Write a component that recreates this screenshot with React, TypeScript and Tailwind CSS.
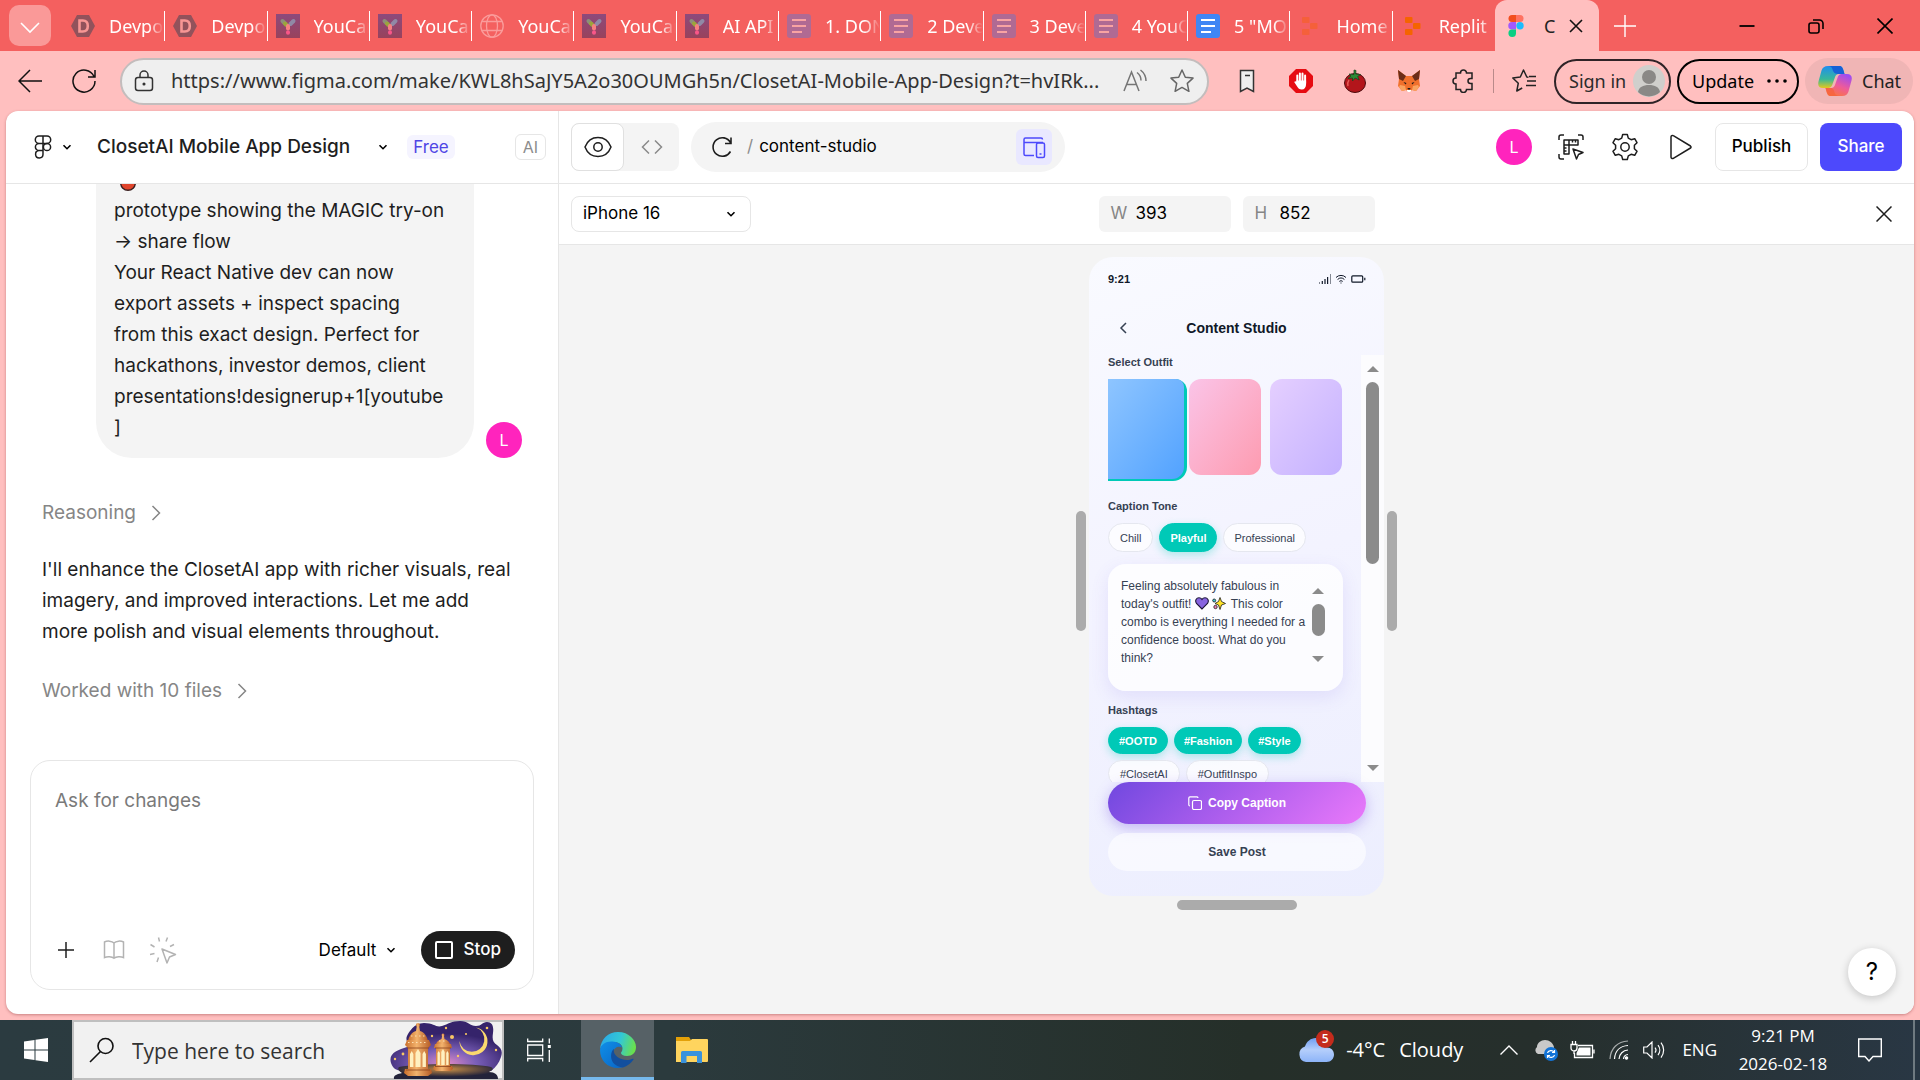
import type { ReactNode } from "react";

type IconProps = { className?: string };

function Chevron({ className = "" }: IconProps) {
  return (
    <svg viewBox="0 0 10 10" className={`size-[10px] shrink-0 ${className}`} fill="none" stroke="currentColor" strokeWidth="1.6">
      <path d="M1.5 3.2 5 6.7l3.5-3.5" />
    </svg>
  );
}

function ChevronRight() {
  return (
    <svg viewBox="0 0 10 16" className="h-4 w-[10px]" fill="none" stroke="currentColor" strokeWidth="1.5">
      <path d="m1.5 1 7 7-7 7" />
    </svg>
  );
}

// ---------- tab strip ----------

function DevpostIcon() {
  return (
    <svg viewBox="0 0 24 24" className="size-6 shrink-0">
      <path d="M6 1h12l6 11-6 11H6L0 12z" fill="#92525b" />
      <path d="M8.500 6.500h3.300c3.400 0 5 2.300 5 5.500s-1.700 5.500-5 5.500H8.500z" fill="none" stroke="#f79694" strokeWidth="2.600" />
    </svg>
  );
}

function YouCamIcon() {
  return (
    <svg viewBox="0 0 24 24" className="size-6 shrink-0">
      <defs>
        <linearGradient id="ycam" x1="0" y1="0" x2="0" y2="1">
          <stop offset="0" stopColor="#8d4a7c" />
          <stop offset="1" stopColor="#98425c" />
        </linearGradient>
      </defs>
      <path fill="url(#ycam)" d="M0 0h24v24H0z" />
      <g strokeWidth="4" strokeLinecap="round">
        <path d="m6.500 7 2 2" stroke="#8d8f7a" />
        <path d="m17.500 7-3 3" stroke="#9089a6" />
        <path d="m9 9.500 1.500 1.500" stroke="#9ca53a" />
        <path d="M12 12v2.500" stroke="#f77f80" />
        <path d="M12 18.300v.4" stroke="#f95688" />
      </g>
    </svg>
  );
}

function GlobeIcon() {
  return (
    <svg viewBox="0 0 24 24" className="size-6 shrink-0" fill="none" stroke="#fa9c9b" strokeWidth="1.300">
      <circle cx="12" cy="12" r="11.200" />
      <ellipse cx="12" cy="12" rx="5.500" ry="11.200" />
      <path d="M2 7.500h20M2 16.500h20" />
    </svg>
  );
}

function DocIcon({ active = false }: { active?: boolean }) {
  return (
    <svg viewBox="0 0 24 24" className="size-6 shrink-0">
      <rect width="24" height="24" rx="3" fill={active ? "#4086f4" : "#b06a93"} />
      <path d="M5 6h14M5 12h14M5 18h10" stroke={active ? "#fff" : "#f9a3a2"} strokeWidth="2.200" />
    </svg>
  );
}

function ReplitIcon({ dim = false }: { dim?: boolean }) {
  return (
    <svg viewBox="0 0 24 24" className="size-6 shrink-0" fill={dim ? "#f5603a" : "#f56400"}>
      <rect x="4" y="3" width="7.500" height="6" rx="1" />
      <rect x="12" y="9" width="7.500" height="6" rx="1" />
      <rect x="4" y="15" width="7.500" height="6" rx="1" />
    </svg>
  );
}

function FigmaColor() {
  return (
    <svg viewBox="0 0 16 24" className="h-6 w-4 shrink-0">
      <path d="M4 1h4v7H4a3.500 3.500 0 0 1 0-7z" fill="#f24e1e" />
      <path d="M8 1h4a3.500 3.500 0 0 1 0 7H8z" fill="#ff7262" />
      <path d="M4 8h4v7.500H4A3.700 3.700 0 0 1 4 8z" fill="#a259ff" />
      <circle cx="12" cy="11.700" r="3.700" fill="#1abcfe" />
      <path d="M4 15.500h4v4a3.800 3.800 0 1 1-4-4z" fill="#0acf83" />
    </svg>
  );
}

const tabs: { title: string; icon: ReactNode }[] = [
  { title: "Devpost", icon: <DevpostIcon /> },
  { title: "Devpost", icon: <DevpostIcon /> },
  { title: "YouCam", icon: <YouCamIcon /> },
  { title: "YouCam", icon: <YouCamIcon /> },
  { title: "YouCam", icon: <GlobeIcon /> },
  { title: "YouCam", icon: <YouCamIcon /> },
  { title: "AI API", icon: <YouCamIcon /> },
  { title: "1. DON", icon: <DocIcon /> },
  { title: "2 Deve", icon: <DocIcon /> },
  { title: "3 Deve", icon: <DocIcon /> },
  { title: "4 YouC", icon: <DocIcon /> },
  { title: '5 "MO', icon: <DocIcon active /> },
  { title: "Home", icon: <ReplitIcon dim /> },
  { title: "Replit", icon: <ReplitIcon /> },
];

function TabStrip() {
  return (
    <div className="flex h-[51px] items-stretch bg-[#f4605f] text-white">
      <button aria-label="Tab actions" className="my-[5px] ml-[9px] mr-3 flex w-[42px] items-center justify-center rounded-[10px] bg-[#fa9998]">
        <svg viewBox="0 0 20 12" className="mt-1 h-3 w-5" fill="none" stroke="#fff" strokeWidth="1.600">
          <path d="m1 1 9 9 9-9" />
        </svg>
      </button>
      <div role="tablist" className="flex min-w-0 flex-1">
        {tabs.map((tab, i) => (
          <button key={i} role="tab" aria-selected={false} className="flex min-w-0 flex-1 items-center">
            <span className="flex min-w-0 flex-1 items-center gap-[14px] pl-2">
              {tab.icon}
              <span className="min-w-0 flex-1 overflow-hidden whitespace-nowrap text-left text-[18px] leading-6 [mask-image:linear-gradient(to_right,#000_72%,transparent)]">
                {tab.title}
              </span>
            </span>
            {i < tabs.length - 1 && <span className="h-[30px] w-px bg-white" />}
          </button>
        ))}
      </div>
      <div className="flex w-[104px] items-center justify-between rounded-t-[12px] bg-[#ffbfbf] pl-[13px] pr-4 text-[#222]">
        <button role="tab" aria-selected className="flex items-center gap-5 text-[18px] leading-6">
          <FigmaColor />
          <span>C</span>
        </button>
        <button aria-label="Close tab">
          <svg viewBox="0 0 14 14" className="size-[14px]" stroke="#111" strokeWidth="1.600">
            <path d="m1 1 12 12M13 1 1 13" />
          </svg>
        </button>
      </div>
      <button aria-label="New tab" className="ml-[15px] self-center">
        <svg viewBox="0 0 22 22" className="size-[22px]" stroke="#fff" strokeWidth="1.400">
          <path d="M11 0v22M0 11h22" />
        </svg>
      </button>
      <div className="ml-[76px] flex w-[208px] items-center text-black">
        <button aria-label="Minimize" className="flex flex-1 justify-center">
          <svg viewBox="0 0 16 16" className="size-4" stroke="currentColor" strokeWidth="1.800"><path d="M.5 8h15" /></svg>
        </button>
        <button aria-label="Restore" className="flex flex-1 justify-center">
          <svg viewBox="0 0 16 16" className="size-4" fill="none" stroke="currentColor" strokeWidth="1.600">
            <rect x="1" y="5" width="10" height="10" rx="2" />
            <path d="M5 2h6.500A3.500 3.500 0 0 1 15 5.500V11" />
          </svg>
        </button>
        <button aria-label="Close" className="flex flex-1 justify-center">
          <svg viewBox="0 0 16 16" className="size-4" stroke="currentColor" strokeWidth="1.600"><path d="m.5.5 15 15m0-15-15 15" /></svg>
        </button>
      </div>
    </div>
  );
}

// ---------- address bar ----------

function FoxIcon() {
  return (
    <svg viewBox="0 0 24 24" className="size-6">
      <path d="M1 1 9 7h6l8-6-1 9 1 7-4 5-4-1-1.500 2h-3L9 21l-4 1-4-5 1-7z" fill="#f0702c" />
      <path d="m1 1 8 6-3 5-4-2zM23 1l-8 6 3 5 4-2z" fill="#6b2c17" />
      <path d="m3 16 5 1 1 4-4 1-3-4zM21 16l-5 1-1 4 4 1 3-4z" fill="#f9a35f" />
      <path d="M9.500 21h5l-1 2h-3z" fill="#fff" />
      <path d="m6.500 13 3 1-1 1.500zM17.500 13l-3 1 1 1.500zM10.500 19h3l-.5 1.500h-2z" fill="#1d1a1a" />
    </svg>
  );
}

function TomatoIcon() {
  return (
    <svg viewBox="0 0 24 24" className="size-6">
      <ellipse cx="12" cy="14" rx="10.500" ry="9.500" fill="#b3151b" stroke="#4d0b0d" />
      <path d="M6 11c-1.500 2-1.500 4-1 6" stroke="#e65a55" strokeWidth="1.500" fill="none" />
      <path d="m11 1 2 .5-.3 3.500 5 .5-3 2 1.500 3.500-4-2-2.700 3V9L5 9.500l3-2.500-2-2 5 .5z" fill="#2c8a36" stroke="#15401b" strokeWidth=".700" />
    </svg>
  );
}

function AdblockIcon() {
  return (
    <svg viewBox="0 0 24 24" className="size-6">
      <path d="M7 0h10l7 7v10l-7 7H7l-7-7V7z" fill="#e60c12" />
      <g stroke="#fff" strokeWidth="2" strokeLinecap="round" fill="none">
        <path d="M8.300 6.500V13M10.900 4.500V12M13.500 4.500V12M16.100 6.500V14" />
      </g>
      <path d="M7.300 11.500h9.800v3.500c0 3.500-1.600 5.500-4.300 5.500-2.400 0-3.600-1-5-3.500l-2.600-4c.8-1 1.700-.7 2.100 0z" fill="#fff" />
    </svg>
  );
}

function CopilotIcon() {
  return (
    <svg viewBox="0 0 34 32" className="h-8 w-[34px]">
      <defs>
        <linearGradient id="cpA" x1="0" y1="0" x2="0" y2="1">
          <stop offset="0" stopColor="#1f8df0" />
          <stop offset=".6" stopColor="#38b89a" />
          <stop offset="1" stopColor="#e5c81c" />
        </linearGradient>
        <linearGradient id="cpB" x1=".7" y1="0" x2=".2" y2="1">
          <stop offset="0" stopColor="#a04cf0" />
          <stop offset=".5" stopColor="#ee5b9a" />
          <stop offset="1" stopColor="#fb7a35" />
        </linearGradient>
      </defs>
      <path d="M10 1h11c3 0 3.700 2 4.500 4.500L26.500 9H21c-2.500 0-3.500 1.500-4.300 4l-2.500 7c-.8 2-2 3-4 3H5c-4 0-5.500-2.500-4.500-6.500l3-11C4.500 2.500 6.500 1 10 1z" fill="url(#cpA)" />
      <path d="M10 1h11c3 0 3.700 2 4.500 4.500L26.500 9H20c-4 0-5-3-5.600-5C13.800 2 12.500 1 10 1z" fill="#1761d6" />
      <path d="M24 31H13c-3 0-3.700-2-4.500-4.500L7.500 23H13c2.500 0 3.500-1.500 4.300-4l2.500-7c.8-2 2-3 4-3H29c4 0 5.500 2.500 4.500 6.500l-3 11C29.500 29.500 27.500 31 24 31z" fill="url(#cpB)" />
      <path d="M24 31H13c-3 0-3.700-2-4.500-4.500L7.500 23h5c3 0 3.500 2.500 4 4.500s2 3.500 7.500 3.500z" fill="#f6603c" opacity=".7" />
    </svg>
  );
}

function AddressBar() {
  return (
    <div className="flex h-[60px] items-center bg-[#ffbfbf] text-[#2b2b2b]">
      <button aria-label="Back" className="ml-[18px]">
        <svg viewBox="0 0 24 24" className="size-6" fill="none" stroke="#111" strokeWidth="1.500"><path d="M24 12H1M12 1 1 12l11 11" /></svg>
      </button>
      <button aria-label="Reload" className="ml-[30px]">
        <svg viewBox="0 0 24 24" className="size-6" fill="none" stroke="#111" strokeWidth="1.500">
          <path d="M22 7.500A11 11 0 1 0 23 12M23 1v7h-7" />
        </svg>
      </button>
      <label className="ml-6 flex h-[47px] min-w-0 flex-1 items-center rounded-full border-2 border-[#c3bdbd] bg-[#efefef] pl-3 pr-[13px]">
        <svg viewBox="0 0 20 22" className="h-[22px] w-5 shrink-0" fill="none" stroke="#333" strokeWidth="1.500">
          <rect x="1.500" y="7.500" width="17" height="13" rx="2.500" />
          <path d="M6 7.500V5a4 4 0 0 1 8 0v2.500" />
          <circle cx="10" cy="14" r=".8" fill="#333" />
        </svg>
        <input
          aria-label="Address"
          className="ml-[17px] min-w-0 flex-1 bg-transparent text-[20px] text-[#333] outline-none"
          defaultValue="https://www.figma.com/make/KWL8hSaJY5A2o30OUMGh5n/ClosetAI-Mobile-App-Design?t=hvIRk..."
        />
        <svg viewBox="0 0 24 24" className="ml-4 size-6 shrink-0" fill="none" stroke="#757575" strokeWidth="1.500">
          <path d="m1 22 7.500-19L16 22M3.500 15.500h10M14 3.500a10 10 0 0 1 4 8M17.500 1A14 14 0 0 1 23 12" />
        </svg>
        <svg viewBox="0 0 24 24" className="ml-[23px] size-6 shrink-0" fill="none" stroke="#666" strokeWidth="1.500" strokeLinejoin="round">
          <path d="m12 1 3.300 7.200 7.700.9-5.700 5.300 1.600 7.900L12 18.400l-6.900 3.900 1.600-7.900L1 9.100l7.700-.9z" />
        </svg>
      </label>
      <div className="ml-[26px] flex items-center gap-[30px]">
        <button aria-label="Reading list">
          <svg viewBox="0 0 24 24" className="size-6" fill="#eee" stroke="#333" strokeWidth="1.500"><path d="M5.500 1.500h13v21L12 19l-6.500 3.500zM10 6.500h5" /></svg>
        </button>
        <button aria-label="Ad blocker"><AdblockIcon /></button>
        <button aria-label="Pomodoro"><TomatoIcon /></button>
        <button aria-label="Wallet"><FoxIcon /></button>
        <button aria-label="Extensions">
          <svg viewBox="0 0 24 24" className="size-6" fill="none" stroke="#222" strokeWidth="1.500">
            <path d="M5 4h4.500a3 3 0 0 1 6 0H21v5.500h-1.500a2.500 2.500 0 0 0 0 5H21V20.500h-5.500a3 3 0 0 1-6 0H5v-5.500a3 3 0 1 1 0-6z" />
          </svg>
        </button>
      </div>
      <div className="ml-[18px] h-6 w-px bg-[#b98a8a]" />
      <button aria-label="Favorites" className="ml-[18px]">
        <svg viewBox="0 0 24 24" className="size-6" fill="none" stroke="#222" strokeWidth="1.500" strokeLinejoin="round">
          <path d="M16.500 8.200 14.800 8 11.500 1 8.300 8l-7.500 1 5.500 5.200L4.800 22l5.400-3M15 12h9M17 7.500h7M14 16.500h10" />
        </svg>
      </button>
      <button className="ml-[18px] flex h-[45px] w-[117px] items-center justify-between rounded-full border-2 border-[#2f2327] pl-[13px] pr-1 text-[18px]">
        Sign in
        <svg viewBox="0 0 32 32" className="size-8">
          <circle cx="16" cy="16" r="16" fill="#d0cfcc" />
          <circle cx="16" cy="12" r="7" fill="#8a8886" />
          <path d="M5 27c1-5 5-7 11-7s10 2 11 7a16 16 0 0 1-22 0z" fill="#8a8886" />
        </svg>
      </button>
      <button className="ml-1.5 flex h-[45px] w-[122px] items-center justify-between rounded-full border-2 border-black pl-[13px] pr-[10px] text-[18px] text-black">
        Update
        <svg viewBox="0 0 20 4" className="h-1 w-5"><circle cx="2" cy="2" r="1.800" /><circle cx="10" cy="2" r="1.800" /><circle cx="18" cy="2" r="1.800" /></svg>
      </button>
      <button className="ml-1.5 mr-[7px] flex h-[46px] w-[108px] items-center gap-[10px] rounded-full bg-[#f0b5b5] pl-[13px] text-[18px] text-[#222]">
        <CopilotIcon />
        Chat
      </button>
    </div>
  );
}

// ---------- left column ----------

function LobsterTip() {
  return (
    <svg viewBox="0 0 16 16" className="size-4">
      <circle cx="8" cy="8" r="7.300" fill="#e0452c" stroke="#3b2020" strokeWidth="1.400" />
    </svg>
  );
}

function Avatar() {
  return (
    <span className="flex size-9 shrink-0 items-center justify-center rounded-full bg-[#ff24bd] text-[16px] leading-6 text-white">L</span>
  );
}

function ChatPanel() {
  return (
    <section className="flex w-[553px] shrink-0 flex-col border-r border-[#e6e6e6]">
      <header className="flex h-[73px] shrink-0 items-center border-b border-[#e6e6e6] pl-7 pr-3">
        <button aria-label="Main menu" className="flex items-center gap-[10px]">
          <svg viewBox="0 0 18 24" className="h-6 w-[18px]" fill="none" stroke="#1e1e1e" strokeWidth="1.500">
            <path d="M9 1H5a3.700 3.700 0 0 0 0 7.400h4zM9 1h4a3.700 3.700 0 0 1 0 7.400H9zM9 8.400H5a3.600 3.600 0 0 0 0 7.200h4zM9 15.600H5A3.700 3.700 0 1 0 9 19.300z" />
            <circle cx="13" cy="12" r="3.600" />
          </svg>
          <Chevron />
        </button>
        <h1 className="ml-[25px] text-[19px] font-medium leading-6 text-[#1e1e1e]">ClosetAI Mobile App Design</h1>
        <button aria-label="File options" className="ml-7"><Chevron /></button>
        <span className="ml-[19px] rounded-md bg-[#f5f4ff] px-1.5 text-[17px] leading-6 text-[#4f46e5]">Free</span>
        <span className="ml-auto rounded-md border border-[#e6e6e6] px-[7px] text-[16px] leading-6 text-[#8c8c8c]">AI</span>
      </header>

      <div className="flex min-h-0 flex-1 flex-col justify-end overflow-hidden text-[19px] leading-[31px] text-[#1e1e1e]">
        <div className="flex items-end gap-3 pl-[90px]">
          <div className="w-[378px] rounded-[36px] bg-[#f4f4f4] pb-[15px] pl-[18px] pr-[29px] pt-4">
            <div className="flex h-[31px] items-end px-1.5 pb-1"><LobsterTip /></div>
            <p>prototype showing the MAGIC try-on → share flow</p>
            <p>
              Your React Native dev can now export assets + inspect spacing from this exact design. Perfect for hackathons, investor demos, client presentations!designerup+1[youtube
              <br />]
            </p>
          </div>
          <Avatar />
        </div>
        <button className="mt-[39px] flex items-center gap-[15px] self-start pl-9 text-[#868686]">
          Reasoning <ChevronRight />
        </button>
        <p className="mt-[26px] pl-9 pr-11">
          I'll enhance the ClosetAI app with richer visuals, real imagery, and improved interactions. Let me add more polish and visual elements throughout.
        </p>
        <button className="mt-7 flex items-center gap-[15px] self-start pl-9 text-[#868686]">
          Worked with 10 files <ChevronRight />
        </button>
      </div>

      <div className="mx-6 mb-6 mt-[54px] flex h-[230px] shrink-0 flex-col rounded-[20px] border border-[#e6e6e6]">
        <textarea
          aria-label="Ask for changes"
          placeholder="Ask for changes"
          className="min-h-0 flex-1 resize-none bg-transparent px-6 pt-6 text-[19px] leading-[31px] outline-none placeholder:text-[#7a7a7a]"
        />
        <div className="flex items-center pb-5 pl-[26px] pr-[18px]">
          <button aria-label="Add">
            <svg viewBox="0 0 18 18" className="size-[18px]" stroke="#1e1e1e" strokeWidth="1.500"><path d="M9 1v16M1 9h16" /></svg>
          </button>
          <button aria-label="Library" className="ml-7">
            <svg viewBox="0 0 22 20" className="h-5 w-[22px]" fill="none" stroke="#b3b3b3" strokeWidth="1.500">
              <path d="M11 3C9 .7 4 .7 1.500 2v15.500c2.500-1.200 7.500-1.200 9.500.8 2-2 7-2 9.500-.8V2C18 .7 13 .7 11 3zM11 3v15" />
            </svg>
          </button>
          <button aria-label="Point and edit" className="ml-6">
            <svg viewBox="0 0 28 28" className="size-7" fill="none" stroke="#b3b3b3" strokeWidth="1.500" strokeLinejoin="round">
              <path d="m13 13 13.500 5.500-6 2.500-2.500 6zM9.500 1.500l1 4M18.500 1.500l-1.500 4M1.500 8.500l4 2.500M25 8.500l-4 2M1 18.500l4.500-1M8 26l1.500-4.500" />
            </svg>
          </button>
          <label className="ml-auto flex items-center">
            <select aria-label="Model" className="w-[67px] appearance-none bg-transparent text-[17px] leading-6 text-black outline-none">
              <option>Default</option>
            </select>
            <Chevron className="pointer-events-none" />
          </label>
          <button className="ml-[25px] flex h-[38px] items-center gap-[11px] rounded-full bg-[#1e1e1e] px-[14px] text-[17px] font-medium text-white">
            <span className="size-[18px] rounded-xs border-2 border-white" />
            Stop
          </button>
        </div>
      </div>
    </section>
  );
}

// ---------- preview toolbar ----------

function PreviewHeader() {
  return (
    <header className="flex h-[73px] shrink-0 items-center border-b border-[#e6e6e6] px-3 text-[#1e1e1e]">
      <div className="flex h-12 w-[108px] rounded-lg bg-[#f4f4f4]">
        <button aria-label="Preview" className="flex w-[53px] items-center justify-center rounded-lg border border-[#e0e0e0] bg-white">
          <svg viewBox="0 0 28 22" className="h-[22px] w-7" fill="none" stroke="currentColor" strokeWidth="1.500">
            <path d="M1 11C3.500 4.500 8.500 1.500 14 1.500S24.500 4.500 27 11c-2.500 6.500-7.500 9.500-13 9.500S3.500 17.500 1 11z" />
            <circle cx="14" cy="11" r="4.200" />
          </svg>
        </button>
        <button aria-label="Code" className="flex flex-1 items-center justify-center text-[#8a8a8a]">
          <svg viewBox="0 0 22 14" className="h-[14px] w-[22px]" fill="none" stroke="currentColor" strokeWidth="1.500"><path d="M8 .5 1.500 7 8 13.500M14 .5 20.500 7 14 13.500" /></svg>
        </button>
      </div>
      <div className="ml-3 flex h-[50px] w-[374px] items-center rounded-full bg-[#f4f4f4] pl-5 pr-[13px]">
        <button aria-label="Refresh preview">
          <svg viewBox="0 0 22 22" className="size-[22px]" fill="none" stroke="currentColor" strokeWidth="1.600">
            <path d="M19.500 6.500A9.300 9.300 0 1 0 19.500 15.500M20 1.500v6h-6" />
          </svg>
        </button>
        <span className="ml-[14px] text-[17px] text-[#8c8c8c]">/</span>
        <input aria-label="Route" defaultValue="content-studio" className="ml-1.5 min-w-0 flex-1 bg-transparent text-[17px] text-black outline-none" />
        <button aria-label="Device preview" className="flex size-9 items-center justify-center rounded-md bg-[#e9e8ff]">
          <svg viewBox="0 0 24 24" className="size-6" fill="none" stroke="#4d49fc" strokeWidth="1.500">
            <path d="M12 20.500H3.500A1.500 1.500 0 0 1 2 19V4.500A1.500 1.500 0 0 1 3.500 3H19a1.500 1.500 0 0 1 1.500 1.500M2 7.500h19" />
            <rect x="14.500" y="8" width="8" height="14.500" rx="1.500" />
            <path d="M17.500 19h2" />
          </svg>
        </button>
      </div>
      <div className="ml-auto flex items-center">
        <Avatar />
        <button aria-label="Inspect" className="ml-[25px]">
          <svg viewBox="0 0 28 28" className="size-7" fill="none" stroke="currentColor" strokeWidth="1.500" strokeLinejoin="round">
            <path d="M2 7V4a2 2 0 0 1 2-2h3M21 2h3a2 2 0 0 1 2 2v3M2 21v3a2 2 0 0 0 2 2h3" />
            <path d="M7 7h14v5h-9v9H7zM12 7v5H7M15.500 7v2.500M18.500 7v2.500M7 15h2.500M7 18h2.500" />
            <path d="m16 16 10 3.500-4.500 2-2 4.500z" />
          </svg>
        </button>
        <button aria-label="Settings" className="ml-[26px]">
          <svg viewBox="0 0 28 28" className="size-7" fill="none" stroke="currentColor" strokeWidth="1.500" strokeLinejoin="round">
            <path d="M11.700 1.500h4.600l1 3.600 2.800 1.600 3.600-1 2.300 4-2.600 2.600v3.400l2.600 2.600-2.300 4-3.600-1-2.800 1.600-1 3.600h-4.600l-1-3.600-2.800-1.600-3.600 1-2.300-4 2.600-2.600v-3.400L2 9.700l2.300-4 3.600 1 2.800-1.600z" />
            <circle cx="14" cy="14" r="4.200" />
          </svg>
        </button>
        <button aria-label="Present" className="ml-[30px]">
          <svg viewBox="0 0 24 26" className="h-[26px] w-6" fill="none" stroke="currentColor" strokeWidth="1.500" strokeLinejoin="round">
            <path d="M2 3v20a1.500 1.500 0 0 0 2.300 1.300L21.500 14a1.200 1.200 0 0 0 0-2L4.300 1.700A1.500 1.500 0 0 0 2 3z" />
          </svg>
        </button>
        <button className="ml-[22px] h-12 w-[93px] rounded-lg border border-[#e6e6e6] text-[17px] font-medium text-black">Publish</button>
        <button className="ml-3 h-12 w-[82px] rounded-lg bg-[#4d49fc] text-[17px] font-medium text-white">Share</button>
      </div>
    </header>
  );
}

function SizeField({ label, value }: { label: string; value: string }) {
  return (
    <label className="flex h-9 w-[132px] items-center rounded-md bg-[#f4f4f4] pl-3 text-[17px] text-[#868686]">
      <span className="w-[25px]">{label}</span>
      <input defaultValue={value} className="min-w-0 flex-1 bg-transparent text-black outline-none" />
    </label>
  );
}

function DeviceBar() {
  return (
    <div className="grid h-[61px] shrink-0 grid-cols-[1fr_auto_1fr] items-center border-b border-[#e6e6e6] px-3">
      <label className="flex h-9 w-[180px] items-center rounded-lg border border-[#e6e6e6] pl-[11px] pr-[14px]">
        <select aria-label="Device" className="min-w-0 flex-1 appearance-none bg-transparent text-[17px] text-black outline-none">
          <option>iPhone 16</option>
        </select>
        <Chevron />
      </label>
      <div className="flex gap-3">
        <SizeField label="W" value="393" />
        <SizeField label="H" value="852" />
      </div>
      <button aria-label="Close device bar" className="mr-[10px] justify-self-end">
        <svg viewBox="0 0 16 16" className="size-4" stroke="#1e1e1e" strokeWidth="1.500"><path d="m.5.5 15 15m0-15-15 15" /></svg>
      </button>
    </div>
  );
}

// ---------- phone ----------

function Arrow({ down = false }: { down?: boolean }) {
  return (
    <svg viewBox="0 0 12 6" className="h-1.5 w-3" fill="#8b8b8b">
      <path d={down ? "M0 0h12L6 6z" : "M0 6h12L6 0z"} />
    </svg>
  );
}

function Chip({ label, active = false, size }: { label: string; active?: boolean; size: string }) {
  return (
    <button
      className={`rounded-full border text-[11px] leading-4 ${size} ${
        active
          ? "border-[#00c9b7] bg-[#00c9b7] font-bold text-white shadow-[0_3px_9px_rgba(0,201,183,0.3)]"
          : "border-[#e5e7ef] bg-white/70 text-[#364153]"
      }`}
    >
      {label}
    </button>
  );
}

function PurpleHeart() {
  return (
    <svg viewBox="0 0 14 13" className="inline h-[13px] w-[14px] align-[-2px]">
      <path d="M7 12 1.500 6.500C-.5 3.500 1.500.8 4 .8c1.400 0 2.400.7 3 1.700.6-1 1.600-1.700 3-1.700 2.500 0 4.500 2.700 2.500 5.700z" fill="#8764e0" stroke="#1d1638" strokeWidth="1.100" />
    </svg>
  );
}

function Sparkles() {
  return (
    <svg viewBox="0 0 14 13" className="ml-[3px] mr-0.5 inline h-[13px] w-[14px] align-[-2px]" stroke="#1a1a1a" strokeWidth=".8">
      <path d="m8 .5 1.500 4L13.500 6.500 9.500 8 8 12.500 6.500 8 3 6.500l3.500-2z" fill="#ffe227" />
      <circle cx="2.200" cy="3.500" r="1.500" fill="#3ec7d6" />
      <circle cx="3.500" cy="10" r="1.700" fill="#ee7fb0" />
    </svg>
  );
}

function StatusIcons() {
  return (
    <div className="flex items-center gap-1">
      <svg viewBox="0 0 12 10" className="h-[10px] w-3" fill="#101828">
        <path opacity=".5" d="M0 8h1v2H0zM11 0h1v10h-1z" />
        <path d="M2.700 7h1.200v3H2.700zM5.400 5h1.200v5H5.400zM8 3h1.200v7H8z" />
      </svg>
      <svg viewBox="0 0 12 10" className="h-[10px] w-3" fill="none" stroke="#101828" strokeWidth="1">
        <path d="M1 3.500a7 7 0 0 1 10 0M2.600 5.500a5 5 0 0 1 6.800 0M4.300 7.400a2.600 2.600 0 0 1 3.400 0M5.500 9h1" />
      </svg>
      <svg viewBox="0 0 15 8" className="h-2 w-[15px]" fill="none" stroke="#101828" strokeWidth="1.200">
        <rect x=".8" y=".8" width="10.900" height="6.400" rx="1" />
        <path d="M13.800 2.700v2.600" />
      </svg>
    </div>
  );
}

function Phone() {
  return (
    <div className="flex h-[639px] w-[295px] flex-col overflow-hidden rounded-[24px] bg-[linear-gradient(160deg,#f9faff,#f3f3ff_50%,#eceefe)] font-['Liberation_Sans',Arial,sans-serif] text-[#364153]">
      <div className="flex h-11 items-center justify-between pl-[19px] pr-[18px] text-[11px] font-bold text-[#101828]">
        9:21 <StatusIcons />
      </div>
      <div className="grid h-[54px] grid-cols-[1fr_auto_1fr] items-center px-[30px]">
        <button aria-label="Back">
          <svg viewBox="0 0 8 12" className="h-3 w-2" fill="none" stroke="#364153" strokeWidth="1.500"><path d="M7 1 2 6l5 5" /></svg>
        </button>
        <h2 className="text-[14px] font-bold text-[#101828]">Content Studio</h2>
      </div>

      <div className="flex h-[427px] shrink-0">
        <div className="min-w-0 flex-1 overflow-hidden px-[19px]">
          <h3 className="text-[11px] font-bold leading-[14px]">Select Outfit</h3>
          <div className="mt-[10px] flex h-[102px] items-start overflow-hidden">
            <div className="h-[102px] w-[79px] shrink-0 rounded-br-[14px] rounded-tr-[12px] bg-[#00c9b7] pb-[2px] pr-[3px]">
              <div className="size-full rounded-br-[12px] rounded-tr-[8px] bg-linear-to-br from-[#8ec5ff] to-[#51a2ff]" />
            </div>
            <div className="ml-0.5 h-24 w-[72px] shrink-0 rounded-xl bg-linear-to-br from-[#fac4e8] to-[#fd9bb0]" />
            <div className="ml-[9px] h-24 w-[72px] shrink-0 rounded-xl bg-linear-to-br from-[#e5cfff] to-[#c4b1ff]" />
          </div>
          <h3 className="mt-[18px] text-[11px] font-bold leading-[14px]">Caption Tone</h3>
          <div className="mt-[10px] flex gap-1.5">
            <Chip label="Chill" size="h-[29px] px-[11px]" />
            <Chip label="Playful" size="h-[29px] px-[10px]" active />
            <Chip label="Professional" size="h-[29px] px-[10px]" />
          </div>
          <div className="-mr-px mt-3 flex h-[127px] rounded-[18px] bg-white/80 pl-[13px] pr-[18px] pt-[13px] shadow-[0_6px_18px_rgba(110,80,220,0.12)]">
            <p className="w-[190px] text-[12px] leading-[18px]">
              Feeling absolutely fabulous in
              <br />
              today's outfit! <PurpleHeart />
              <Sparkles /> This color
              <br />
              combo is everything I needed for a
              <br />
              confidence boost. What do you
              <br />
              think?
            </p>
            <div className="flex h-[85px] w-[14px] flex-col items-center pt-[11px]">
              <Arrow />
              <div className="mt-[10px] h-8 w-[13px] rounded-full bg-[#8b8b8b]" />
              <div className="mt-auto"><Arrow down /></div>
            </div>
          </div>
          <h3 className="mt-3 text-[11px] font-bold leading-[14px]">Hashtags</h3>
          <div className="mt-[10px] flex flex-wrap gap-1.5">
            <Chip label="#OOTD" size="h-[27px] px-[10px]" active />
            <Chip label="#Fashion" size="h-[27px] px-[9px]" active />
            <Chip label="#Style" size="h-[27px] px-[9px]" active />
            <Chip label="#ClosetAI" size="h-[27px] px-[11px]" />
            <Chip label="#OutfitInspo" size="h-[27px] px-[11px]" />
          </div>
        </div>
        <div className="flex w-[23px] flex-col items-center bg-[#fcfcfe] pb-[11px] pt-[11px]">
          <Arrow />
          <div className="mt-[10px] h-[182px] w-[13px] rounded-full bg-[#8b8b8b]" />
          <div className="mt-auto"><Arrow down /></div>
        </div>
      </div>

      <div className="flex flex-col gap-[9px] pl-[19px] pr-[18px] font-bold">
        <button className="flex h-[42px] items-center justify-center gap-1.5 rounded-full bg-[linear-gradient(135deg,#7048df,#a85cec_45%,#ea79fa)] text-[12px] text-white shadow-[0_4px_14px_rgba(112,72,223,0.35)]">
          <svg viewBox="0 0 14 14" className="size-[14px]" fill="none" stroke="#fff" strokeWidth="1.200">
            <rect x="4.500" y="4.500" width="9" height="9" rx="1.500" />
            <path d="M2 10A1.300 1.300 0 0 1 .8 8.700V2A1.300 1.300 0 0 1 2 .8h7A1.300 1.300 0 0 1 10 2" />
          </svg>
          Copy Caption
        </button>
        <button className="h-[38px] rounded-full bg-white/60 text-[12px]">Save Post</button>
      </div>
    </div>
  );
}

function Canvas() {
  return (
    <div className="flex min-h-0 flex-1 flex-col items-center bg-[#f4f4f4] pt-3">
      <div className="flex items-center gap-[3px]">
        <div className="-mt-3 h-[120px] w-[10px] rounded-full bg-[#ababab]" />
        <Phone />
        <div className="-mt-3 h-[120px] w-[10px] rounded-full bg-[#ababab]" />
      </div>
      <div className="mt-1 h-[10px] w-[120px] rounded-full bg-[#ababab]" />
    </div>
  );
}

// ---------- taskbar ----------

function LanternArt() {
  return (
    <svg viewBox="0 0 112 58" className="h-[58px] w-28 shrink-0">
      <defs>
        <radialGradient id="sky" cx=".5" cy=".85" r=".6">
          <stop offset="0" stopColor="#e08ac4" />
          <stop offset=".45" stopColor="#7a5fb8" />
          <stop offset="1" stopColor="#35236b" />
        </radialGradient>
        <linearGradient id="gold" x1="0" y1="0" x2="1" y2="0">
          <stop offset="0" stopColor="#c96f2c" />
          <stop offset=".45" stopColor="#f3b36d" />
          <stop offset="1" stopColor="#b45a24" />
        </linearGradient>
        <radialGradient id="floor" cx=".5" cy=".35" r=".5">
          <stop offset="0" stopColor="#c98f45" />
          <stop offset="1" stopColor="#23233a" />
        </radialGradient>
      </defs>
      <path d="M1 42C-2 32 8 29 17 26c2-3-2-7 0-11S24 2 34 2s12 5 18 3S62 0 70 0s10 5 16 5 6-4 11-4 7 4 6 11 0 9 4 12 6 6 4 12-5 10-10 14H14C7 50 3 48 1 42z" fill="url(#sky)" />
      <path d="M9 46c20-4 76-4 92 0 4 2 0 4-2 5 6 0 9 3 9 7H4c-1-4 4-5 8-6-3-2-5-4-3-6z" fill="url(#floor)" />
      <path d="M86 6.500A14 14 0 1 1 69.500 20 12.500 12.500 0 1 0 86 6.500z" fill="#fbd96e" />
      <g fill="#f8c765">
        <circle cx="56" cy="7" r="1.200" /><circle cx="42" cy="15" r="1.200" /><circle cx="76" cy="13" r="1.100" />
        <circle cx="62" cy="16" r="2" /><circle cx="97" cy="7" r="1.300" /><circle cx="106" cy="29" r="1.200" />
        <circle cx="68" cy="35" r="1.200" /><circle cx="13" cy="33" r="1.400" /><circle cx="5" cy="38" r="1.200" />
      </g>
      <g fill="url(#gold)">
        <circle cx="28" cy="4" r="2" />
        <path d="M27 4h2l1 6c4 1 7 5 8 10H18c1-5 4-9 8-10z" />
        <path d="M17 19h22l2 5-3 3H18l-3-3z" />
        <path d="M18 27h20v21H18zM15 48h26l1 4-4 3H18l-4-3z" />
        <circle cx="53" cy="14" r="1.500" />
        <path d="M52.300 14h1.400l.8 4c3 1 5 3 6 6h-15c1-3 3-5 6-6z" />
        <path d="M45 23h16l1 4H44zM46 27h14v18H46zM44 45h18l1 3-3 2H46l-3-2z" />
      </g>
      <g fill="#fff0c0">
        <path d="M20 46V33l1.700-3 1.700 3v13zM25.500 46V32l2.500-4 2.500 4v14zM32.500 46V33l1.700-3 1.700 3v13z" />
        <path d="M47.500 44V32l1.200-2 1.200 2v12zM51.300 44V31l1.700-3 1.700 3v13zM56.200 44V32l1.200-2 1.200 2v12z" />
      </g>
      <path d="M21 15h14M18 21.500h20M49 20h8" stroke="#fce1b4" strokeWidth="1" strokeDasharray="1.500 2.500" />
      <path d="M17 27h22M16 49h24M45 27h16M45 45.500h16" stroke="#8a421c" strokeWidth=".8" />
    </svg>
  );
}

function EdgeIcon() {
  return (
    <svg viewBox="0 0 36 36" className="size-9">
      <defs>
        <linearGradient id="edA" x1="0" y1=".3" x2="1" y2=".5">
          <stop offset="0" stopColor="#2aa8e8" />
          <stop offset=".55" stopColor="#33c8d5" />
          <stop offset="1" stopColor="#6be04a" />
        </linearGradient>
        <linearGradient id="edB" x1="0" y1="0" x2="1" y2="1">
          <stop offset="0" stopColor="#0f8fe8" />
          <stop offset="1" stopColor="#0a64c4" />
        </linearGradient>
      </defs>
      <path d="M0 17C1 7 8 0 18 0c11 0 18 8 18 15 0 6-4 9-9 9-4 0-6-1.500-6-3 0-1 1.500-1.700 1.500-4.500 0-4-4-6.500-9-6.500C7 10 2 13 0 17z" fill="url(#edA)" />
      <path d="M0 18C1 12 6 9 12.500 9.500c5 .4 9 2.500 9.500 6-3-2-8-.5-9 5-1 7 5 13 12 13.500-2 1.300-4.500 2-7 2C7 36 0 28 0 18z" fill="url(#edB)" />
      <path d="M14 17c-4 2-6 17 9 18.400 4-1 8-4 10.500-7.900.4-.8-.5-1-1-.7-3 1.500-7 1.700-11 .2C16 25 13 21 14 17z" fill="#124f9e" />
    </svg>
  );
}

function Taskbar() {
  return (
    <footer className="flex h-[60px] shrink-0 items-center bg-[linear-gradient(to_right,#2b3b40,#2b3a3d_35%,#252f29_65%,#262f2c_80%,#293744)] font-['Open_Sans','Noto_Sans',sans-serif] text-white">
      <button aria-label="Start" className="flex w-[72px] justify-center">
        <svg viewBox="0 0 24 24" className="size-6" fill="#fff"><path d="M0 3.400 10.500 2v9.500H0zM11.500 1.800 24 0v11.500H11.500zM0 12.500h10.500V22L0 20.600zM11.500 12.500H24V24l-12.500-1.800z" /></svg>
      </button>
      <label className="flex h-[60px] w-[432px] items-center border-2 border-[#bfbfbf] bg-[#f1f1f1] pl-[15px]">
        <svg viewBox="0 0 26 26" className="size-[26px] shrink-0" fill="none" stroke="#111" strokeWidth="1.600"><circle cx="16.500" cy="9" r="7.500" /><path d="M11.500 14.500 1 25" /></svg>
        <input aria-label="Search" placeholder="Type here to search" className="ml-[17px] min-w-0 flex-1 bg-transparent pt-1 text-[21px] outline-none placeholder:text-[#333]" />
        <LanternArt />
      </label>
      <button aria-label="Task view" className="mr-[7px] flex w-[70px] justify-center">
        <svg viewBox="0 0 24 24" className="size-6" fill="none" stroke="#fff" strokeWidth="1.300">
          <path d="M.7.500v3h15v-3M.7 23.500v-3h15v3M.7 7h15v10.500H.7zM22.300.5v5M22.300 12v12" />
          <path d="M20.800 7h3v3h-3z" fill="#fff" stroke="none" />
        </svg>
      </button>
      <button aria-label="Microsoft Edge" className="flex h-full w-[73px] items-center justify-center border-b-[3px] border-[#76b9ed] bg-[#566166] pt-[3px]"><EdgeIcon /></button>
      <button aria-label="File Explorer" className="flex w-[76px] justify-center">
        <svg viewBox="0 0 32 27" className="h-[27px] w-8">
          <path d="M0 0h13l2 3v2H0z" fill="#e3a008" />
          <path d="M0 4h14l2-2h15a1 1 0 0 1 1 1v21a1 1 0 0 1-1 1H0z" fill="#ffd45e" />
          <path d="M5 26V15.500a1.500 1.500 0 0 1 1.500-1.500h18a1.500 1.500 0 0 1 1.500 1.500V26h-5v-7H10.500v7z" fill="#3a92dc" />
        </svg>
      </button>

      <button className="ml-auto flex items-center text-[20px]">
        <span className="relative mr-3">
          <svg viewBox="0 0 36 24" className="h-6 w-9">
            <defs>
              <linearGradient id="cloud" x1="0" y1="0" x2="0" y2="1">
                <stop offset="0" stopColor="#6f9df0" />
                <stop offset=".5" stopColor="#b4cefb" />
                <stop offset="1" stopColor="#8db4f8" />
              </linearGradient>
            </defs>
            <path d="M8 24a8 8 0 0 1-1-15.500C8.500 3.500 13 0 17.500 0 23 0 27 4 27.500 9.500 33 9 36 12.500 36 16.500S33 24 28.500 24z" fill="url(#cloud)" />
          </svg>
          <span className="absolute -top-2 right-0 flex size-[18px] items-center justify-center rounded-full bg-[#c42b1c] text-[12px] font-semibold">5</span>
        </span>
        <span className="mr-[14px]">-4°C</span>
        <span>Cloudy</span>
      </button>
      <button aria-label="Hidden icons" className="ml-[37px]">
        <svg viewBox="0 0 18 10" className="h-[10px] w-[18px]" fill="none" stroke="#fff" strokeWidth="1.400"><path d="m.5 9.500 8.500-8.500 8.500 8.500" /></svg>
      </button>
      <button aria-label="OneDrive" className="ml-4">
        <svg viewBox="0 0 24 22" className="h-[22px] w-6">
          <path d="M4 15a4 4 0 0 1-1-7C3 4 7 1 11 1c4.500 0 8 3 9 7v7z" fill="#c9c9c9" />
          <circle cx="17" cy="15" r="7" fill="#1273d6" />
          <path d="M13.500 14c.5-2.500 5-3.500 6.500-.8M20.500 11v2.500H18M20.500 16c-.5 2.500-5 3.500-6.500.8M13.500 19v-2.500H16" fill="none" stroke="#fff" strokeWidth="1.200" />
        </svg>
      </button>
      <svg viewBox="0 0 25 18" className="ml-3 h-[18px] w-[25px]" fill="none" stroke="#fff" strokeWidth="1.300">
        <path d="M8 4.500h14.500v12H4.500V12M24 8.500v4M1 3.500h6V7a3 3 0 0 1-6 0zM2.500 0v3M5.500 0v3M4 10v3" />
        <path d="M9 6.500h11.500v8H6.500V12z" fill="#fff" stroke="none" />
      </svg>
      <svg viewBox="0 0 20 20" className="ml-[14px] size-5" fill="none" stroke="#fff" strokeWidth="1.200">
        <path opacity=".6" d="M1 19C1.500 8.500 8.500 1.500 19 1" />
        <path d="M5.500 19C6 11 11 6 19 5.500M10 19c.3-5 4-8.700 9-9M14.500 19c.2-2.500 2-4.300 4.500-4.500" />
        <circle cx="17.500" cy="18" r="1.200" fill="#fff" />
      </svg>
      <svg viewBox="0 0 22 18" className="ml-[14px] h-[18px] w-[22px]" fill="none" stroke="#fff" strokeWidth="1.200">
        <path d="M.7 6H4l5-5v16l-5-5H.7zM12 6.500a4 4 0 0 1 0 5M15 4a8 8 0 0 1 0 10M18 1.500a12 12 0 0 1 0 15" />
      </svg>
      <button className="ml-[17px] text-[17px]">ENG</button>
      <button className="ml-[19px] flex w-[94px] flex-col items-center text-[17px] leading-7">
        <span>9:21 PM</span>
        <span>2026-02-18</span>
      </button>
      <button aria-label="Notifications" className="ml-7 mr-[31px]">
        <svg viewBox="0 0 24 24" className="size-6" fill="none" stroke="#fff" strokeWidth="1.400"><path d="M.7 1h22.600v17.500H15l-4 4.500-4-4.500H.7z" /></svg>
      </button>
      <div className="mr-[5px] h-full w-0.5 bg-[#6f7a81]" />
    </footer>
  );
}

export default function App() {
  return (
    <div className="flex h-screen flex-col bg-[#ffbfbf] font-['Noto_Sans','Open_Sans',sans-serif]">
      <TabStrip />
      <AddressBar />
      <main className="relative mx-1.5 mb-1.5 flex min-h-0 flex-1 overflow-hidden rounded-xl bg-white font-[Inter,sans-serif] shadow-[0_1px_3px_rgba(120,40,40,0.4)]">
        <ChatPanel />
        <section className="flex min-w-0 flex-1 flex-col">
          <PreviewHeader />
          <DeviceBar />
          <Canvas />
        </section>
        <button aria-label="Help" className="absolute bottom-[18px] right-[18px] flex size-12 items-center justify-center rounded-full bg-white text-[24px] text-black shadow-[0_2px_8px_rgba(0,0,0,0.2)]">?</button>
      </main>
      <Taskbar />
    </div>
  );
}
